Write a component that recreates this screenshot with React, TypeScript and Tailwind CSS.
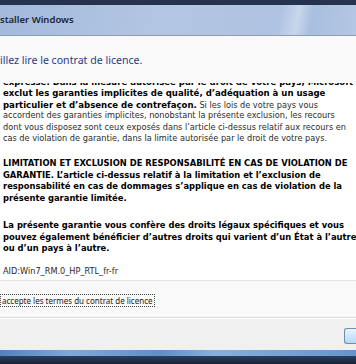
import React from "react";

const body = { fontFamily: '"DejaVu Sans Condensed", "DejaVu Sans", sans-serif' };
const ui = { fontFamily: '"Noto Sans", "Open Sans", sans-serif' };

function L({ children, top }: { children: React.ReactNode; top?: string }) {
  return (
    <div className={`whitespace-nowrap h-[11.5px] leading-[11.5px] ${top ?? ""}`}>{children}</div>
  );
}

export default function App() {
  return (
    <div className="w-[356px] h-[364px] overflow-hidden flex flex-col bg-[#f9f9f9]">
      <div className="h-[5px] bg-[#25334f]" />
      <div
        className="h-[30px] flex items-center bg-[linear-gradient(100deg,#a3badd_0%,#b3c6e3_45%,#afc3e2_78%,#c8d6ec_83%,#a9bfe0_87%,#b4c7e4_100%)]"
        style={ui}
      >
        <span className="text-[9.5px] font-semibold text-[#1c2433] leading-none">staller Windows</span>
      </div>
      <div className="h-px bg-[#8c9cb4]" />
      <div className="flex flex-col flex-1">
        <div className="h-[47px] flex items-center" style={ui}>
          <span className="text-[10.6px] text-[#1f3c8c] leading-none mt-[1px]">illez lire le contrat de licence.</span>
        </div>
        <div className="h-[198px] overflow-hidden bg-white border-b border-[#e2e2e2] pl-[3px] text-[9.1px] text-[#2a2a2a]" style={body}>
          <div className="-mt-[7.5px]">
            <L><b className="text-black text-[9.5px]">expresse. Dans la mesure autorisée par le droit de votre pays, Microsoft</b></L>
            <L><b className="text-black text-[9.5px]">exclut les garanties implicites de qualité, d’adéquation à un usage</b></L>
            <L><b className="text-black text-[9.5px]">particulier et d’absence de contrefaçon.</b> Si les lois de votre pays vous</L>
            <L>accordent des garanties implicites, nonobstant la présente exclusion, les recours</L>
            <L>dont vous disposez sont ceux exposés dans l’article ci-dessus relatif aux recours en</L>
            <L>cas de violation de garantie, dans la limite autorisée par le droit de votre pays.</L>
            <div className="font-bold text-black text-[9.3px]">
              <L top="mt-[12.5px]">LIMITATION ET EXCLUSION DE RESPONSABILITÉ EN CAS DE VIOLATION DE</L>
              <L>GARANTIE. L’article ci-dessus relatif à la limitation et l’exclusion de</L>
              <L>responsabilité en cas de dommages s’applique en cas de violation de la</L>
              <L>présente garantie limitée.</L>
              <L top="mt-[16px]">La présente garantie vous confère des droits légaux spécifiques et vous</L>
              <L>pouvez également bénéficier d’autres droits qui varient d’un État à l’autre</L>
              <L>ou d’un pays à l’autre.</L>
            </div>
            <L top="mt-[12px]">AID:Win7_RM.0_HP_RTL_fr-fr</L>
          </div>
        </div>
        <div className="h-[36px] flex items-center" style={ui}>
          <div className="border border-dotted border-[#444] h-[13px] flex items-center pl-[1px] pr-[1px] mt-[3px]">
            <span className="text-[8px] text-[#222] leading-none whitespace-nowrap">accepte les termes du contrat de licence</span>
          </div>
        </div>
      </div>
      <div className="h-px bg-[#dcdcdc]" />
      <div className="h-[32px] bg-[#f0f0f0] border-t border-white flex items-start justify-end pt-[9px]">
        <div className="w-[12px] h-[16px] rounded-l-[3px] border border-r-0 border-[#6f8fb0] bg-[linear-gradient(180deg,#e8f3fc_0%,#cfe6f9_50%,#b6d9f5_100%)]" />
      </div>
      <div className="h-[6px] bg-[linear-gradient(90deg,#4f83c0_0%,#7eaadb_20%,#5d8fca_45%,#86b0de_60%,#6395cd_100%)]" />
      <div className="flex-1 bg-[linear-gradient(180deg,#2b3d5c_0%,#16233a_100%)]" />
    </div>
  );
}
